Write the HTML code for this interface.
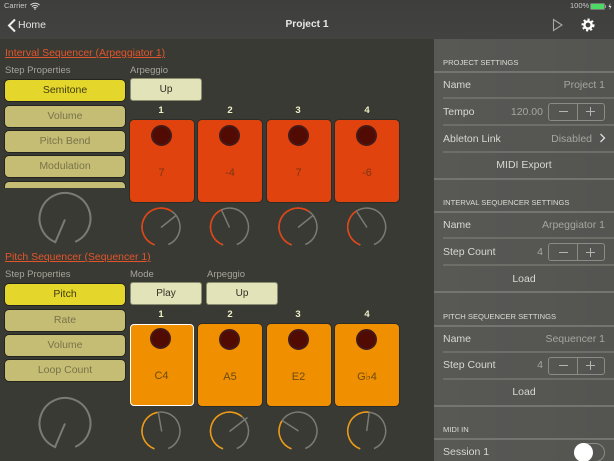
<!DOCTYPE html>
<html><head><meta charset="utf-8">
<style>
html,body{margin:0;padding:0;background:#3a3a34}
#r{position:relative;width:614px;height:461px;overflow:hidden;background:#3a3a34;font-family:"Liberation Sans",sans-serif;font-size:10.5px}
#r div{position:absolute;box-sizing:border-box;white-space:nowrap}
.t{height:14px;line-height:14px}
.lab{color:#a5a59c;font-size:9.5px}
.btn{left:5px;width:120px;height:21px;line-height:20px;text-align:center;border-radius:4px;background:#c6bd74;color:#77734a;box-shadow:0 0 0 1px #24241f;font-size:10.5px}
.on{background:#e5d62b;color:#3f3c10}
.top{height:23px;line-height:21px;width:72px;text-align:center;border-radius:3px;background:#e2e3b9;border:1.5px solid #8c8d6e;color:#2f2f25;font-size:10px}
.n{width:64px;text-align:center;color:#f0f0c8;font-weight:bold;font-size:9.5px;height:12px;line-height:12px}
.pad{width:64px;height:82px;border-radius:4px;box-shadow:0 0 0 1px #2c2c28}
.r{background:#e0430d}
.o{background:#f09000}
.pad i{position:absolute;left:21px;top:5px;width:21px;height:21px;border-radius:50%;background:#520b02;border:2.5px solid #43191a;box-sizing:border-box}
.pad span{position:absolute;left:0;right:0;top:46px;text-align:center;height:14px;line-height:14px;font-size:11px}
.r span{color:#7c3517}
.o span{color:#6b4a10}
.p{left:434px;width:180px;background:transparent}
.h{left:443px;color:#dcdcd6;font-size:7.6px;height:12px;line-height:12px}
.l{left:443px;color:#d8d8d2;font-size:10.5px}
.v{right:9px;color:#a6a6a0;font-size:10.5px;text-align:right}
.c{left:434px;width:180px;text-align:center;color:#d8d8d2;font-size:10.5px}
.full{left:434px;width:180px;height:1.5px;background:#747470}
.sub{left:443px;width:171px;height:1.5px;background:#6e6e69}
.st{left:548px;width:57px;height:18px;border:1.2px solid #8b8b86;border-radius:3px}
.st b{position:absolute;left:27.5px;top:0;width:1px;height:16px;background:#8b8b86}
.st u{position:absolute;background:#b4b4ae}
</style></head>
<body><div id="r">

<!-- nav -->
<div style="left:0;top:0;width:614px;height:39px;background:linear-gradient(#3e3e3d,#424241)"></div>
<div class="t" style="left:4px;top:0;color:#c8c8c8;font-size:7.5px;height:12px;line-height:12px">Carrier</div>
<svg style="position:absolute;left:30px;top:2px" width="10" height="8" viewBox="0 0 10 8"><path d="M.5 3a6.5 6.5 0 0 1 9 0M2 4.6a4.3 4.3 0 0 1 6 0M3.5 6a2 2 0 0 1 3 0" fill="none" stroke="#ddd" stroke-width="1"/><circle cx="5" cy="7" r=".8" fill="#ddd"/></svg>
<div style="left:570px;top:0;color:#c8c8c8;font-size:7.5px;height:12px;line-height:12px">100%</div>
<div style="left:590px;top:3px;width:15px;height:7px;background:#4cd964;border:1px solid #777;border-radius:1.5px"></div>
<div style="left:605px;top:5px;width:1px;height:3px;background:#999"></div>
<svg style="position:absolute;left:608px;top:3px" width="4" height="7" viewBox="0 0 4 7"><path d="M2.5 0L.5 4H2L1.5 7L3.5 3H2z" fill="#ddd"/></svg>
<svg style="position:absolute;left:7px;top:18px" width="10" height="15" viewBox="0 0 10 15"><path d="M8 1.5L2 7.5L8 13.5" fill="none" stroke="#eee" stroke-width="2"/></svg>
<div class="t" style="left:18px;top:18px;color:#e4e4e4;font-size:10.5px">Home</div>
<div class="t" style="left:207px;top:18px;width:200px;text-align:center;color:#e8e8e8;font-size:10.2px;font-weight:bold">Project 1</div>
<svg style="position:absolute;left:551px;top:17px" width="14" height="16" viewBox="0 0 14 16"><path d="M2.5 2.500L11 8L2.500 13.500Z" fill="none" stroke="#a8a8a8" stroke-width="1.1"/></svg>
<svg style="position:absolute;left:581px;top:18px" width="14" height="14" viewBox="0 0 14 14"><circle cx="7" cy="7" r="3.6" fill="none" stroke="#fff" stroke-width="2.4"/><circle cx="7" cy="7" r="5.4" fill="none" stroke="#fff" stroke-width="2.2" pathLength="48" stroke-dasharray="3 3"/></svg>

<!-- panel -->
<div style="left:434px;top:39px;width:180px;height:422px;background:linear-gradient(90deg,#585855,#545451)"></div>
<div class="h" style="top:57px">PROJECT SETTINGS</div>
<div class="full" style="top:71px"></div>
<div class="t l" style="top:78px">Name</div><div class="t v" style="top:78px">Project 1</div>
<div class="sub" style="top:97px"></div>
<div class="t l" style="top:105px">Tempo</div><div class="t v" style="top:105px;right:71px">120.00</div>
<div class="st" style="top:102.5px"><b></b><u style="left:10px;top:7.5px;width:9px;height:1px"></u><u style="left:37px;top:7.5px;width:9px;height:1px"></u><u style="left:41px;top:3.5px;width:1px;height:9px"></u></div>
<div class="sub" style="top:124px"></div>
<div class="t l" style="top:132px">Ableton Link</div><div class="t v" style="top:132px;right:22px">Disabled</div>
<svg style="position:absolute;left:599px;top:133px" width="7" height="10" viewBox="0 0 7 10"><path d="M1.500 1L5.500 5L1.500 9" fill="none" stroke="#ddd" stroke-width="1.3"/></svg>
<div class="sub" style="top:151px"></div>
<div class="t c" style="top:158px">MIDI Export</div>
<div class="full" style="top:178px"></div>

<div class="h" style="top:197px">INTERVAL SEQUENCER SETTINGS</div>
<div class="full" style="top:211px"></div>
<div class="t l" style="top:218px">Name</div><div class="t v" style="top:218px">Arpeggiator 1</div>
<div class="sub" style="top:237px"></div>
<div class="t l" style="top:245px">Step Count</div><div class="t v" style="top:245px;right:71px">4</div>
<div class="st" style="top:243px"><b></b><u style="left:10px;top:7.5px;width:9px;height:1px"></u><u style="left:37px;top:7.5px;width:9px;height:1px"></u><u style="left:41px;top:3.5px;width:1px;height:9px"></u></div>
<div class="sub" style="top:264px"></div>
<div class="t c" style="top:272px">Load</div>
<div class="full" style="top:291px"></div>

<div class="h" style="top:311px">PITCH SEQUENCER SETTINGS</div>
<div class="full" style="top:325px"></div>
<div class="t l" style="top:332px">Name</div><div class="t v" style="top:332px">Sequencer 1</div>
<div class="sub" style="top:351px"></div>
<div class="t l" style="top:358px">Step Count</div><div class="t v" style="top:358px;right:71px">4</div>
<div class="st" style="top:356.5px"><b></b><u style="left:10px;top:7.5px;width:9px;height:1px"></u><u style="left:37px;top:7.5px;width:9px;height:1px"></u><u style="left:41px;top:3.5px;width:1px;height:9px"></u></div>
<div class="sub" style="top:378px"></div>
<div class="t c" style="top:385px">Load</div>
<div class="full" style="top:405px"></div>

<div class="h" style="top:424px">MIDI IN</div>
<div class="full" style="top:438px"></div>
<div class="t l" style="top:445px">Session 1</div>
<div style="left:574px;top:443px;width:31px;height:19px;border:1px solid #8b8b86;border-radius:10px"></div>
<div style="left:574px;top:443px;width:19px;height:19px;border-radius:50%;background:#fff"></div>

<!-- interval section -->
<div class="t" style="left:5px;top:47px;color:#e2552a;font-size:10.45px;text-decoration:underline">Interval Sequencer (Arpeggiator 1)</div>
<div class="t lab" style="left:5px;top:64px">Step Properties</div>
<div class="t lab" style="left:130px;top:64px">Arpeggio</div>
<div class="btn on" style="top:80px">Semitone</div>
<div class="btn" style="top:105.5px">Volume</div>
<div class="btn" style="top:131px">Pitch Bend</div>
<div class="btn" style="top:156px">Modulation</div>
<div style="left:4px;top:180px;width:122px;height:8px;overflow:hidden"><div style="left:1px;top:1.5px;width:120px;height:21px;border-radius:4px;background:#c6bd74;box-shadow:0 0 0 1px #24241f"></div></div>
<div class="top" style="left:130px;top:78px">Up</div>

<div class="n" style="left:129px;top:105px">1</div>
<div class="n" style="left:198px;top:105px">2</div>
<div class="n" style="left:266px;top:105px">3</div>
<div class="n" style="left:335px;top:105px">4</div>
<div class="pad r" style="left:129.5px;top:119.5px"><i></i><span>7</span></div>
<div class="pad r" style="left:198px;top:119.5px"><i></i><span>-4</span></div>
<div class="pad r" style="left:266.5px;top:119.5px"><i></i><span>7</span></div>
<div class="pad r" style="left:335px;top:119.5px"><i></i><span>-6</span></div>

<!-- pitch section -->
<div class="t" style="left:5px;top:251px;color:#e2552a;font-size:10.45px;text-decoration:underline">Pitch Sequencer (Sequencer 1)</div>
<div class="t lab" style="left:5px;top:268px">Step Properties</div>
<div class="t lab" style="left:130px;top:268px">Mode</div>
<div class="t lab" style="left:207px;top:268px">Arpeggio</div>
<div class="btn on" style="top:284px">Pitch</div>
<div class="btn" style="top:310px">Rate</div>
<div class="btn" style="top:335px">Volume</div>
<div class="btn" style="top:360px">Loop Count</div>
<div class="top" style="left:130px;top:282px">Play</div>
<div class="top" style="left:206px;top:282px">Up</div>

<div class="n" style="left:129px;top:309px">1</div>
<div class="n" style="left:198px;top:309px">2</div>
<div class="n" style="left:266px;top:309px">3</div>
<div class="n" style="left:335px;top:309px">4</div>
<div class="pad o" style="left:129.5px;top:323.5px;box-shadow:none;border:1.5px solid #fff"><i style="left:19.5px;top:3.5px"></i><span style="top:44.5px;left:-1.5px;right:-1.5px">C4</span></div>
<div class="pad o" style="left:198px;top:323.5px"><i></i><span>A5</span></div>
<div class="pad o" style="left:266.5px;top:323.5px"><i></i><span>E2</span></div>
<div class="pad o" style="left:335px;top:323.5px"><i></i><span>G♭4</span></div>

<!-- knobs -->
<svg style="position:absolute;left:0;top:0" width="434" height="461" viewBox="0 0 434 461" fill="none" stroke-width="1.5">
<g stroke="#7b7b74">
<circle cx="65" cy="218.5" r="25.5" stroke-width="2" pathLength="360" stroke-dasharray="316 44" transform="rotate(112 65 218.5)"/>
<path d="M65 219.500L55 243" stroke-width="2"/>
<circle cx="65" cy="423.5" r="25.5" stroke-width="2" pathLength="360" stroke-dasharray="316 44" transform="rotate(112 65 423.5)"/>
<path d="M65 423.500L55 447" stroke-width="2"/>
<circle cx="161" cy="227" r="19" pathLength="360" stroke-dasharray="318 42" transform="rotate(111 161 227)"/>
<circle cx="229.500" cy="227" r="19" pathLength="360" stroke-dasharray="318 42" transform="rotate(111 229.5 227)"/>
<circle cx="298" cy="227" r="19" pathLength="360" stroke-dasharray="318 42" transform="rotate(111 298 227)"/>
<circle cx="366.700" cy="227" r="19" pathLength="360" stroke-dasharray="318 42" transform="rotate(111 366.7 227)"/>
<circle cx="161" cy="431" r="19" pathLength="360" stroke-dasharray="318 42" transform="rotate(111 161 431)"/>
<circle cx="229.500" cy="431" r="19" pathLength="360" stroke-dasharray="318 42" transform="rotate(111 229.5 431)"/>
<circle cx="298" cy="431" r="19" pathLength="360" stroke-dasharray="318 42" transform="rotate(111 298 431)"/>
<circle cx="366.700" cy="431" r="19" pathLength="360" stroke-dasharray="318 42" transform="rotate(111 366.7 431)"/>
<path d="M161 227.500L176 215.500M229.500 227.500L221.500 210M298 227.500L313 215.500M367 227.500L356 210.500M161.700 431.500L158.300 412.500M229.500 431.500L247.500 417.500M298.500 431L282.500 420.700M366.700 431L369.200 412"/>
</g>
<g stroke="#e8430f">
<circle cx="161" cy="227" r="19" pathLength="360" stroke-dasharray="195 400" transform="rotate(111 161 227)"/>
<circle cx="229.500" cy="227" r="19" pathLength="360" stroke-dasharray="133 400" transform="rotate(111 229.5 227)"/>
<circle cx="298" cy="227" r="19" pathLength="360" stroke-dasharray="195 400" transform="rotate(111 298 227)"/>
<circle cx="366.700" cy="227" r="19" pathLength="360" stroke-dasharray="126 400" transform="rotate(111 366.7 227)"/>
</g>
<g stroke="#f09a10">
<circle cx="161" cy="431" r="19" pathLength="360" stroke-dasharray="149 400" transform="rotate(111 161 431)"/>
<circle cx="229.500" cy="431" r="19" pathLength="360" stroke-dasharray="200 400" transform="rotate(111 229.5 431)"/>
<circle cx="298" cy="431" r="19" pathLength="360" stroke-dasharray="101 400" transform="rotate(111 298 431)"/>
<circle cx="366.700" cy="431" r="19" pathLength="360" stroke-dasharray="166 400" transform="rotate(111 366.7 431)"/>
</g>
</svg>

</div></body></html>
